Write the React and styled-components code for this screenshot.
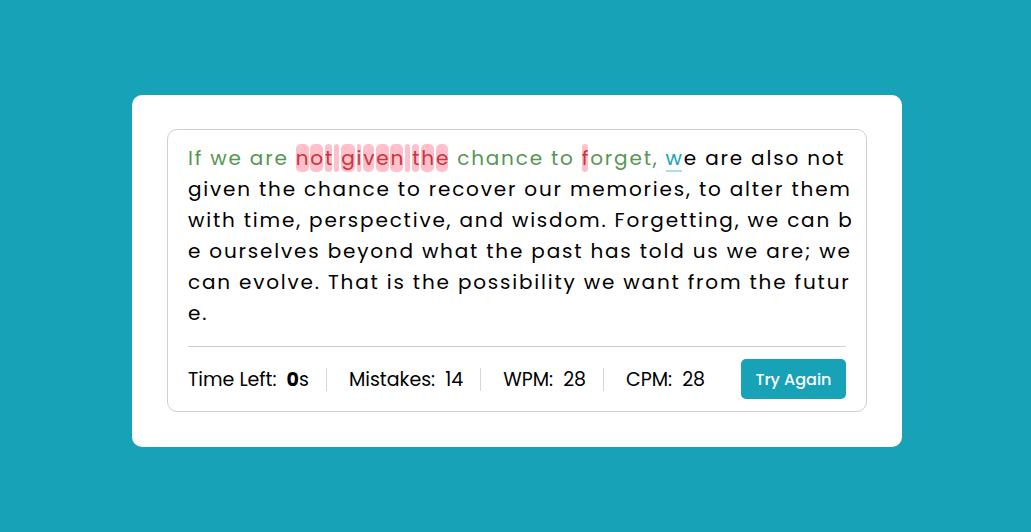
import React from "react";
import styled, { createGlobalStyle } from "styled-components";

const GlobalStyle = createGlobalStyle`
  html, body { margin: 0; padding: 0; }
  body {
    background: #17a2b8;
    font-family: "Poppins", "DejaVu Sans", "Noto Sans", sans-serif;
    color: #000;
  }
`;

const Page = styled.div`
  min-height: 532px;
  box-sizing: border-box;
  display: flex;
  justify-content: center;
  align-items: flex-start;
  padding: 95px 0 0 3px;
`;

const Card = styled.div`
  width: 770px;
  box-sizing: border-box;
  background: #fff;
  border-radius: 10px;
  padding: 34px 35px 35px;
`;

const Board = styled.div`
  border: 1px solid #cfcfcf;
  border-radius: 10px;
  padding: 13px 20px 12px;
`;

const TypingText = styled.div`
  font-size: 20px;
  line-height: 31px;
`;

const Line = styled.div`
  white-space: pre;
  height: 31px;
`;

const colors = {
  correct: "#56964f",
  incorrect: "#cb3439",
  current: "#17a2b8",
  pending: "#000",
};

const Char = styled.span`
  display: inline-block;
  line-height: 28px;
  vertical-align: baseline;
  margin-right: 1.8px;
  border-radius: ${(p) => (p.$status === "current" ? "0" : "5px")};
  color: ${(p) => colors[p.$status]};
  background: ${(p) => (p.$status === "incorrect" ? "#ffc0cb" : "transparent")};
  box-shadow: ${(p) =>
    p.$status === "current" ? "inset 0 -2px 0 rgba(23,162,184,0.35)" : "none"};
`;

const Footer = styled.div`
  margin-top: 17px;
  border-top: 1px solid #cfcfcf;
  padding-top: 12px;
  display: flex;
  align-items: center;
  justify-content: space-between;
`;

const Stats = styled.div`
  display: flex;
  align-items: center;
`;

const Stat = styled.div`
  display: flex;
  align-items: center;
  gap: 10px;
  font-size: 19px;
  line-height: 23px;
  padding: 0 17px 0 22px;
  border-right: 1px solid #d6d6d6;
  &:first-child { padding-left: 0; }
  &:last-child { border-right: none; }
`;

const Value = styled.span`
  font-size: 19px;
`;

const Strong = styled.b`
  font-weight: 700;
`;

const Button = styled.button`
  height: 40px;
  padding: 0 14.5px;
  border: none;
  border-radius: 5px;
  background: #17a2b8;
  color: #fff;
  font-family: inherit;
  font-size: 16px;
  font-weight: 500;
  cursor: pointer;
`;

const lines = [
  "If we are not given the chance to forget, we are also not ",
  "given the chance to recover our memories, to alter them ",
  "with time, perspective, and wisdom. Forgetting, we can b",
  "e ourselves beyond what the past has told us we are; we ",
  "can evolve. That is the possibility we want from the futur",
  "e.",
];

const incorrectSet = new Set();
for (let i = 10; i < 23; i++) incorrectSet.add(i); // "not given the"
incorrectSet.add(34); // "f" in forget
const CURRENT = 42;

function statusOf(i) {
  if (i === CURRENT) return "current";
  if (i > CURRENT) return "pending";
  if (incorrectSet.has(i)) return "incorrect";
  return "correct";
}

export default function App() {
  let offset = 0;
  return (
    <>
      <GlobalStyle />
      <Page>
        <Card>
          <Board>
            <TypingText>
              {lines.map((line, li) => {
                const start = offset;
                offset += line.length;
                return (
                  <Line key={li}>
                    {line.split("").map((ch, ci) => (
                      <Char key={ci} $status={statusOf(start + ci)}>
                        {ch}
                      </Char>
                    ))}
                  </Line>
                );
              })}
            </TypingText>
            <Footer>
              <Stats>
                <Stat>
                  Time Left:
                  <Value>
                    <Strong>0</Strong>s
                  </Value>
                </Stat>
                <Stat>
                  Mistakes:<Value>14</Value>
                </Stat>
                <Stat>
                  WPM:<Value>28</Value>
                </Stat>
                <Stat>
                  CPM:<Value>28</Value>
                </Stat>
              </Stats>
              <Button>Try Again</Button>
            </Footer>
          </Board>
        </Card>
      </Page>
    </>
  );
}
